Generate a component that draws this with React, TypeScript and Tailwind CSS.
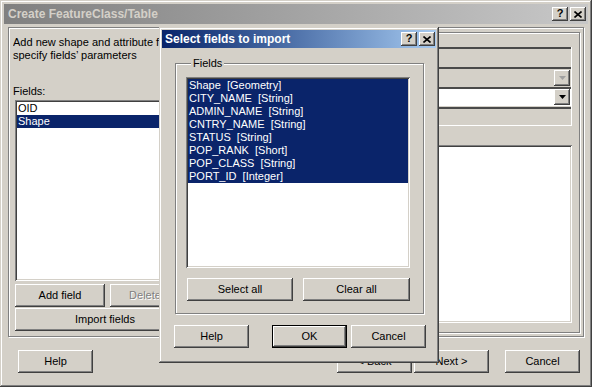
const raised =
  "shadow-[inset_-1px_-1px_0_#404040,inset_1px_1px_0_#ffffff,inset_-2px_-2px_0_#808080]";
const frame =
  "shadow-[inset_-1px_-1px_0_#404040,inset_1px_1px_0_#d4d0c8,inset_-2px_-2px_0_#808080,inset_2px_2px_0_#ffffff]";
const sunken =
  "shadow-[inset_1px_1px_0_#808080,inset_-1px_-1px_0_#ffffff,inset_2px_2px_0_#404040,inset_-2px_-2px_0_#d4d0c8]";
const etched =
  "border border-[#808080] shadow-[inset_1px_1px_0_#ffffff,1px_1px_0_#ffffff]";

const importFields = [
  "Shape  [Geometry]",
  "CITY_NAME  [String]",
  "ADMIN_NAME  [String]",
  "CNTRY_NAME  [String]",
  "STATUS  [String]",
  "POP_RANK  [Short]",
  "POP_CLASS  [String]",
  "PORT_ID  [Integer]",
];

function Button({
  label,
  className = "",
  disabled = false,
  isDefault = false,
}: {
  label: string;
  className?: string;
  disabled?: boolean;
  isDefault?: boolean;
}) {
  if (isDefault) {
    return (
      <div className={`h-[23px] border border-black ${className}`}>
        <div
          className={`h-full flex items-center justify-center bg-[#d4d0c8] ${raised}`}
        >
          {label}
        </div>
      </div>
    );
  }
  return (
    <div
      className={`h-[23px] flex items-center justify-center bg-[#d4d0c8] ${raised} ${
        disabled ? "text-[#808080] [text-shadow:1px_1px_0_#ffffff]" : ""
      } ${className}`}
    >
      {label}
    </div>
  );
}

function CaptionButtons() {
  return (
    <div className="flex gap-[2px]">
      <div
        className={`w-[16px] h-[14px] bg-[#d4d0c8] flex items-center justify-center ${raised}`}
      >
        <span className="font-bold text-[11px] leading-none text-black pb-[1px]">
          ?
        </span>
      </div>
      <div
        className={`w-[16px] h-[14px] bg-[#d4d0c8] flex items-center justify-center ${raised}`}
      >
        <svg width="8" height="7" viewBox="0 0 8 7">
          <path
            d="M0.5 0.5L7.5 6.5M7.5 0.5L0.5 6.5"
            stroke="#000"
            strokeWidth="1.6"
          />
        </svg>
      </div>
    </div>
  );
}

function DropArrow({ disabled = false }: { disabled?: boolean }) {
  return (
    <div
      className={`w-[16px] h-[16px] bg-[#d4d0c8] flex items-center justify-center ${raised}`}
    >
      <svg width="7" height="4" viewBox="0 0 7 4">
        <polygon points="0,0 7,0 3.5,4" fill={disabled ? "#a0a0a0" : "#000"} />
      </svg>
    </div>
  );
}

function MainWindow() {
  return (
    <div className={`w-[592px] h-[387px] bg-[#d4d0c8] p-[4px] flex flex-col ${frame}`}>
      <div className="h-[20px] flex items-center pl-[4px] pr-[2px] bg-linear-to-r from-[#808080] to-[#c8c8c8]">
        <span className="font-bold text-[12px] text-[#d4d0c8]">
          Create FeatureClass/Table
        </span>
        <div className="ml-auto">
          <CaptionButtons />
        </div>
      </div>

      <div className={`mt-[3px] mx-[4px] h-[310px] flex ${etched}`}>
        {/* left side: fields list */}
        <div className="w-[200px] flex flex-col pt-[8px] pl-[4px]">
          {/* the dialog sits over the rest of this line */}
          <p className="w-[147px] overflow-hidden leading-[13px] whitespace-nowrap">
            Add new shape and attribute fields and
          </p>
          <p className="leading-[13px] whitespace-nowrap">specify fields’ parameters</p>
          <p className="mt-[23px] leading-[13px]">Fields:</p>
          <div className={`mt-[2px] ml-[2px] w-[186px] h-[181px] bg-white p-[2px] ${sunken}`}>
            <div className="h-[13px] leading-[13px] pl-[1px]">OID</div>
            <div className="h-[13px] leading-[13px] pl-[1px] bg-[#0a246a] text-white">
              Shape
            </div>
          </div>
          <div className="mt-[3px] ml-[2px] flex gap-[5px]">
            <Button label="Add field" className="w-[90px]" />
            <Button label="Delete" className="w-[70px]" disabled />
          </div>
          <Button label="Import fields" className="mt-[1px] ml-[2px] w-[180px]" />
        </div>

        {/* right side: field properties */}
        <div className={`flex-1 mt-[4px] mb-[3px] mr-[3px] ml-[10px] pt-[14px] pr-[7px] pb-[9px] flex flex-col ${etched}`}>
          <div className="ml-[8px] border-r border-b border-white">
            <div className="h-[20px] border-t-2 border-[#4a4a4a]" />
            <div className="h-[20px] border-t-2 border-[#4a4a4a] flex items-center justify-end pr-[1px]">
              <DropArrow disabled />
            </div>
            <div className="h-[20px] border-t-2 border-[#4a4a4a] flex items-start">
              <div className="flex-1 h-[17px] bg-white flex justify-end pr-[1px]">
                <DropArrow />
              </div>
            </div>
            <div className="h-[18px] border-t-2 border-[#4a4a4a]" />
          </div>
          <div className={`ml-[8px] mt-[19px] flex-1 bg-white ${sunken}`} />
        </div>
      </div>

      <div className="mt-[13px] flex pl-[14px] pr-[8px]">
        <Button label="Help" className="w-[75px]" />
        <div className="ml-auto flex">
          <Button label="< Back" className="w-[75px]" />
          <Button label="Next >" className="ml-[2px] w-[75px]" />
          <Button label="Cancel" className="ml-[16px] w-[75px]" />
        </div>
      </div>
    </div>
  );
}

function ImportDialog() {
  return (
    <div
      className={`absolute left-[159px] top-[27px] w-[280px] h-[336px] bg-[#d4d0c8] p-[3px] flex flex-col ${frame}`}
    >
      <div className="h-[18px] flex items-center pl-[3px] pr-[1px] bg-linear-to-r from-[#0a246a] to-[#a6caf0]">
        <span className="font-bold text-[12px] text-white">Select fields to import</span>
        <div className="ml-auto">
          <CaptionButtons />
        </div>
      </div>

      <fieldset className={`mt-[9px] ml-[13px] w-[249px] pl-[10px] pb-[12px] pt-[7px] ${etched}`}>
        <legend className="ml-[5px] px-[2px] leading-[13px] bg-[#d4d0c8]">Fields</legend>
        <div className={`w-[224px] h-[191px] bg-white p-[2px] ${sunken}`}>
          {importFields.map((f) => (
            <div
              key={f}
              className="h-[13px] leading-[13px] pl-[1px] bg-[#0a246a] text-white whitespace-pre"
            >
              {f}
            </div>
          ))}
        </div>
        <div className="mt-[10px] ml-[1px] flex gap-[10px]">
          <Button label="Select all" className="w-[106px]" />
          <Button label="Clear all" className="w-[107px]" />
        </div>
      </fieldset>

      <div className="mt-[11px] pl-[12px] flex">
        <Button label="Help" className="w-[75px]" />
        <Button label="OK" className="ml-[23px] w-[75px]" isDefault />
        <Button label="Cancel" className="ml-[4px] w-[75px]" />
      </div>
    </div>
  );
}

export default function App() {
  return (
    <div className="relative w-[597px] h-[390px] bg-white overflow-hidden font-['Liberation_Sans',Arial,sans-serif] text-[11px] text-black">
      <MainWindow />
      <ImportDialog />
    </div>
  );
}
